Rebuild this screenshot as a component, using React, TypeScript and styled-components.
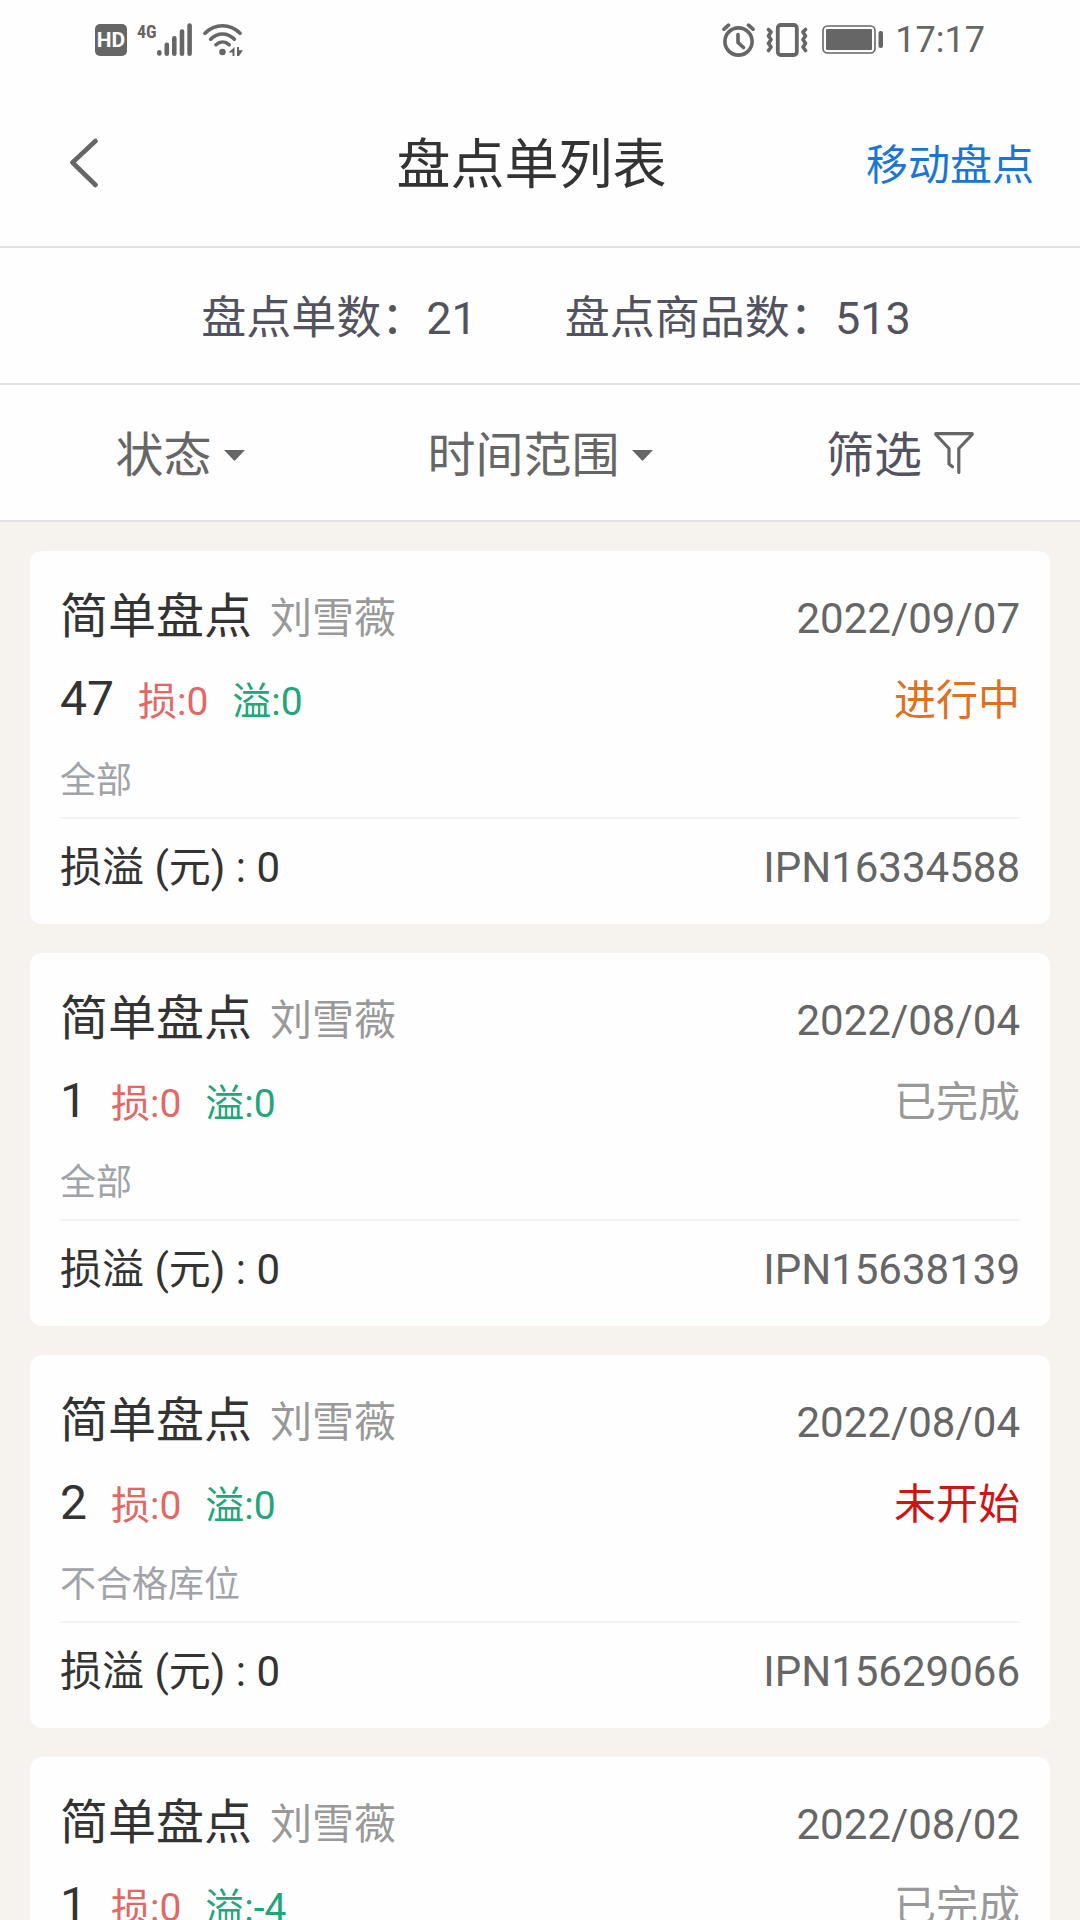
import React from "react";
import styled, { createGlobalStyle } from "styled-components";

const GlobalStyle = createGlobalStyle`
  *, *::before, *::after { box-sizing: border-box; }
  body {
    margin: 0;
    background: #f6f3ee;
    color: #333;
    font-family: Roboto, "Noto Sans CJK SC", sans-serif;
  }
  h1, h2, p, ul, dl, dt, dd { margin: 0; padding: 0; font-weight: 400; }
  ul { list-style: none; }
  button, select { font: inherit; color: inherit; background: none; border: 0; padding: 0; margin: 0; cursor: pointer; }
`;

const Screen = styled.div`
  display: flex;
  flex-direction: column;
  height: 100vh;
  overflow: hidden;
`;

const StatusBar = styled.div`
  display: flex;
  justify-content: space-between;
  align-items: center;
  flex: none;
  height: 80px;
  padding: 0 95px;
  background: #fefefe;
  color: #666;
`;

const StatusGroup = styled.div<{ $gap: number }>`
  display: flex;
  align-items: center;
  gap: ${(p) => p.$gap}px;
`;

const HdBadge = styled.span`
  width: 32px;
  height: 32px;
  border-radius: 5px;
  background: #666;
  color: #fefefe;
  font-size: 21px;
  font-weight: 700;
  line-height: 32px;
  text-align: center;
`;

const Network = styled.span`
  display: flex;
  align-items: flex-start;
`;

const NetworkLabel = styled.span`
  font-family: "Roboto Condensed", "Liberation Sans Narrow", Roboto, sans-serif;
  font-size: 18px;
  font-weight: 700;
  line-height: 18px;
`;

const Clock = styled.time`
  font-size: 36px;
  line-height: 40px;
`;

const TopBar = styled.header`
  display: grid;
  grid-template-columns: 1fr auto 1fr;
  align-items: center;
  flex: none;
  height: 168px;
  padding: 6px 46px 0 29px;
  background: #fefefe;
  border-bottom: 2px solid #e3e3e3;
`;

const BackButton = styled.button`
  display: flex;
  justify-self: start;
  padding-left: 35px;
`;

const Title = styled.h1`
  font-size: 54px;
  line-height: 64px;
`;

const TopLink = styled.a`
  justify-self: end;
  color: #1a75d6;
  font-size: 42px;
  line-height: 64px;
  text-decoration: none;
`;

const Summary = styled.dl`
  display: flex;
  justify-content: center;
  align-items: center;
  gap: 88px;
  flex: none;
  height: 137px;
  padding: 6px 0 0 32px;
  background: #fefefe;
  border-bottom: 2px solid #e3e3e3;
  color: #53535f;
  font-size: 45px;
  line-height: 60px;
`;

const SummaryItem = styled.div`
  display: flex;
`;

const Filters = styled.div`
  display: grid;
  grid-template-columns: repeat(3, 1fr);
  flex: none;
  height: 137px;
  padding-top: 6px;
  background: #fefefe;
  border-bottom: 2px solid #e3e3e3;
  color: #666;
  font-size: 48px;
  line-height: 64px;
`;

const FilterField = styled.label`
  display: flex;
  justify-content: center;
  align-items: center;
  gap: 12px;
`;

const FilterSelect = styled.select`
  appearance: none;
  field-sizing: content;
  line-height: 64px;
  outline: none;
`;

const FilterButton = styled.button`
  display: flex;
  justify-content: center;
  align-items: center;
  gap: 12px;
  color: #53535f;
`;

const List = styled.ul`
  display: flex;
  flex-direction: column;
  gap: 29px;
  flex: 1;
  min-height: 0;
  padding: 29px 30px;
  overflow-y: auto;
  scrollbar-width: none;
`;

const Card = styled.li`
  flex: none;
  padding: 26px 30px 8px;
  border-radius: 12px;
  background: #fefefe;
`;

const Row = styled.div<{ $height: number }>`
  display: flex;
  justify-content: space-between;
  align-items: baseline;
  height: ${(p) => p.$height}px;
  line-height: ${(p) => p.$height}px;
`;

const Cluster = styled.div<{ $gap: number }>`
  display: flex;
  align-items: baseline;
  gap: ${(p) => p.$gap}px;
`;

const Kind = styled.h2`
  font-size: 48px;
`;

const Person = styled.span`
  color: #999;
  font-size: 42px;
`;

const Meta = styled.span`
  color: #666;
  font-size: 42px;
`;

const Count = styled.span`
  font-size: 48px;
`;

const Delta = styled.span<{ $color: string }>`
  color: ${(p) => p.$color};
  font-size: 39px;
`;

const State = styled.span<{ $color: string }>`
  color: ${(p) => p.$color};
  font-size: 42px;
`;

const Scope = styled.p`
  padding-top: 4px;
  color: #a1a3a8;
  font-size: 36px;
  line-height: 72px;
  border-bottom: 2px solid #f5f3f0;
`;

const Amount = styled.span`
  font-size: 42px;
`;

const STATE_COLORS: Record<string, string> = {
  进行中: "#e0701c",
  已完成: "#999",
  未开始: "#cf1414",
};

interface Sheet {
  id: string;
  date: string;
  count: number;
  loss: number;
  gain: number;
  scope: string;
  state: string;
}

const SHEETS: Sheet[] = [
  { id: "IPN16334588", date: "2022/09/07", count: 47, loss: 0, gain: 0, scope: "全部", state: "进行中" },
  { id: "IPN15638139", date: "2022/08/04", count: 1, loss: 0, gain: 0, scope: "全部", state: "已完成" },
  { id: "IPN15629066", date: "2022/08/04", count: 2, loss: 0, gain: 0, scope: "不合格库位", state: "未开始" },
  { id: "IPN15620417", date: "2022/08/02", count: 1, loss: 0, gain: -4, scope: "全部", state: "已完成" },
];

const SignalIcon = () => (
  <svg width="36" height="34" viewBox="1 0 36 34" stroke="#666" strokeWidth="4.6" strokeLinecap="round" aria-hidden="true">
    <path d="M3.3 30.4v-1M10.8 30.7v-9M18.3 30.7V15.3M26 30.7V8.5M33.6 30.7V2.6" />
  </svg>
);

const WifiIcon = () => (
  <svg width="40" height="34" viewBox="0 0 40 34" fill="none" stroke="#666" strokeWidth="3.6" strokeLinecap="round" aria-hidden="true">
    <path d="M2 10.3C12 .3 27 .3 37 10.3" />
    <path d="M7.6 16.2c7-7 16.8-7 23.8 0" />
    <path d="M13 21.8c4-3.8 9.2-3.8 13.2 0" />
    <circle cx="19.5" cy="29" r="3.3" fill="#666" stroke="none" />
    <path d="M31.5 24v9h-2v-3.5h-4zM34 24h2v3.3h4L36 33h-2z" fill="#666" stroke="none" />
  </svg>
);

const AlarmIcon = () => (
  <svg width="33" height="34" viewBox="0 0 33 34" fill="none" stroke="#666" strokeWidth="3.6" strokeLinecap="round" aria-hidden="true">
    <circle cx="16.5" cy="18.5" r="13.6" />
    <path d="M16 11.5v8l5.5 5M2 6.2 6.5 2.2M31 6.2 26.5 2.2" />
  </svg>
);

const VibrateIcon = () => (
  <svg width="45" height="34" viewBox="0 0 45 34" fill="none" stroke="#666" strokeLinecap="round" strokeLinejoin="round" aria-hidden="true">
    <rect x="11.8" y="2" width="19" height="30" rx="3" strokeWidth="3.8" />
    <path d="M2.5 6.5 5 9l-2.5 4L5 16.5 2.5 20.5 5 24l-2.5 3.5M39.5 6.5 37 9l2.5 4L37 16.5l2.5 4L37 24l2.5 3.5" strokeWidth="3.6" />
  </svg>
);

const BatteryIcon = () => (
  <svg width="62" height="30" viewBox="0 0 62 30" fill="#666" aria-hidden="true">
    <rect x="1" y="1" width="52" height="27" rx="4.5" fill="none" stroke="#666" strokeWidth="1.6" />
    <rect x="4" y="4" width="46" height="21" rx="1" />
    <rect x="56.5" y="6" width="4.5" height="17" rx="2" />
  </svg>
);

const BackIcon = () => (
  <svg width="40" height="56" viewBox="0 3 40 56" fill="none" stroke="#666" strokeWidth="4.6" strokeLinecap="round" strokeLinejoin="round" aria-hidden="true">
    <path d="M31.5 6 8.5 27.5l23 22.5" />
  </svg>
);

const CaretIcon = () => (
  <svg width="21" height="11" viewBox="0 0 21 11" fill="#666" aria-hidden="true">
    <path d="M0 0h21L10.5 11z" />
  </svg>
);

const FunnelIcon = () => (
  <svg width="40" height="48" viewBox="0 1 40 48" fill="none" stroke="#666" strokeWidth="3.2" strokeLinecap="round" strokeLinejoin="round" aria-hidden="true">
    <path d="M24.8 41.5V17.5L38.2 3.5V2.7H1.8V3.5L15 17.5v15.5l3.5 2.8" />
  </svg>
);

function SheetCard({ sheet }: { sheet: Sheet }) {
  return (
    <Card>
      <Row $height={80}>
        <Cluster $gap={18}>
          <Kind>简单盘点</Kind>
          <Person>刘雪薇</Person>
        </Cluster>
        <Meta as="time">{sheet.date}</Meta>
      </Row>
      <Row $height={84}>
        <Cluster $gap={24}>
          <Count>{sheet.count}</Count>
          <Delta $color="#e26765">损:{sheet.loss}</Delta>
          <Delta $color="#22a578">溢:{sheet.gain}</Delta>
        </Cluster>
        <State $color={STATE_COLORS[sheet.state]}>{sheet.state}</State>
      </Row>
      <Scope>{sheet.scope}</Scope>
      <Row $height={97}>
        <Amount>损溢 (元) : 0</Amount>
        <Meta>{sheet.id}</Meta>
      </Row>
    </Card>
  );
}

export default function App() {
  return (
    <Screen>
      <GlobalStyle />
      <StatusBar>
        <StatusGroup $gap={10}>
          <HdBadge>HD</HdBadge>
          <Network>
            <NetworkLabel>4G</NetworkLabel>
            <SignalIcon />
          </Network>
          <WifiIcon />
        </StatusGroup>
        <StatusGroup $gap={11}>
          <AlarmIcon />
          <VibrateIcon />
          <BatteryIcon />
          <Clock>17:17</Clock>
        </StatusGroup>
      </StatusBar>
      <TopBar>
        <BackButton type="button" aria-label="返回">
          <BackIcon />
        </BackButton>
        <Title>盘点单列表</Title>
        <TopLink href="#mobile">移动盘点</TopLink>
      </TopBar>
      <Summary>
        <SummaryItem>
          <dt>盘点单数：</dt>
          <dd>21</dd>
        </SummaryItem>
        <SummaryItem>
          <dt>盘点商品数：</dt>
          <dd>513</dd>
        </SummaryItem>
      </Summary>
      <Filters>
        <FilterField>
          <FilterSelect aria-label="状态" defaultValue="">
            <option value="">状态</option>
            {Object.keys(STATE_COLORS).map((state) => (
              <option key={state}>{state}</option>
            ))}
          </FilterSelect>
          <CaretIcon />
        </FilterField>
        <FilterField>
          <FilterSelect aria-label="时间范围" defaultValue="">
            <option value="">时间范围</option>
          </FilterSelect>
          <CaretIcon />
        </FilterField>
        <FilterButton type="button">
          筛选
          <FunnelIcon />
        </FilterButton>
      </Filters>
      <List>
        {SHEETS.map((sheet) => (
          <SheetCard key={sheet.id} sheet={sheet} />
        ))}
      </List>
    </Screen>
  );
}
